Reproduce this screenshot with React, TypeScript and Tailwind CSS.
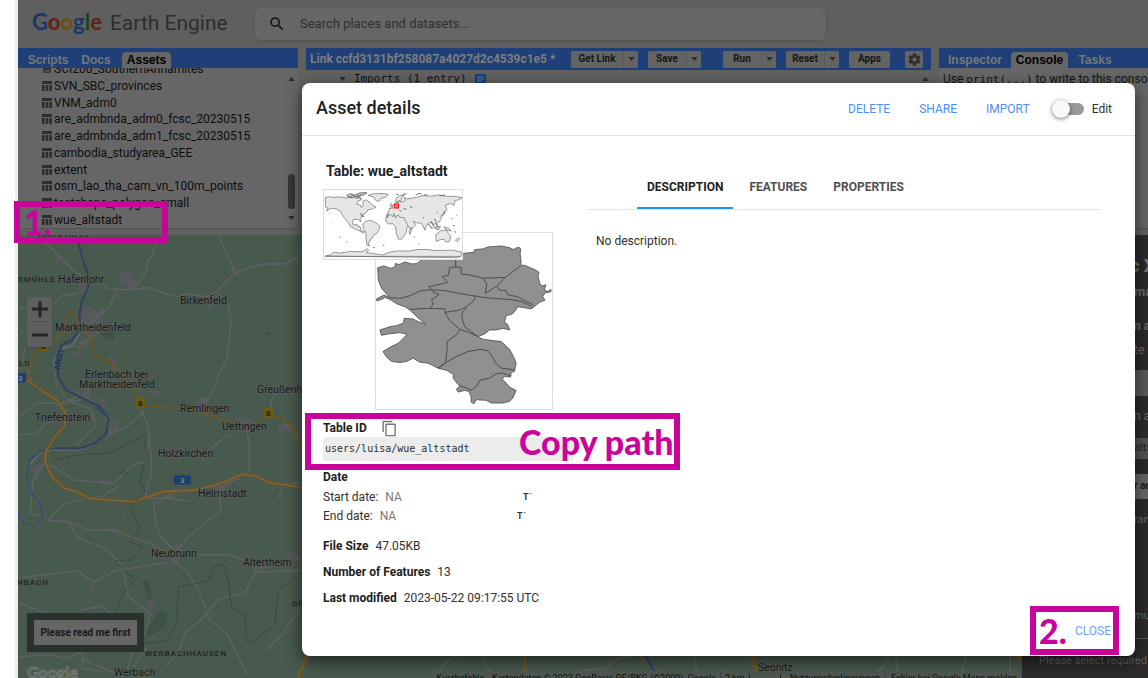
import React from "react";
import { MdContentCopy, MdSearch, MdSettings, MdImage } from "react-icons/md";

const assets = [
  "SCI200_SouthernAnnamites",
  "SVN_SBC_provinces",
  "VNM_adm0",
  "are_admbnda_adm0_fcsc_20230515",
  "are_admbnda_adm1_fcsc_20230515",
  "cambodia_studyarea_GEE",
  "extent",
  "osm_lao_tha_cam_vn_100m_points",
  "testshape_polygon_small",
  "wue_altstadt",
];

function TableIcon() {
  return (
    <svg viewBox="0 0 10 10" className="h-[10px] w-[10px] shrink-0" aria-hidden="true">
      <path d="M0 0h10v3H0zM0 4h2.6v6H0zM3.7 4h2.6v6H3.7zM7.4 4H10v6H7.4z" fill="#2d2d2d" />
    </svg>
  );
}

function Caret({ up = false }: { up?: boolean }) {
  return (
    <svg viewBox="0 0 8 5" className="h-1 w-[7px] shrink-0" aria-hidden="true">
      <path d={up ? "M0 5L4 0l4 5z" : "M0 0l4 5 4-5z"} fill="#2c2c2c" />
    </svg>
  );
}

function AssetPanel() {
  return (
    <section className="flex w-[280px] shrink-0 flex-col overflow-hidden border-b border-[#555] bg-[#666]">
      <nav className="z-10 flex h-5 shrink-0 items-end bg-[#1f3f78] pl-1 font-['Liberation_Sans',sans-serif] text-[12px] font-bold leading-4 text-[#777]">
        <button className="w-[52px] text-center">Scripts</button>
        <button className="mr-1 w-11 text-center">Docs</button>
        <button className="w-[49px] rounded-t-sm bg-[#666] text-center text-black">Assets</button>
      </nav>
      <div className="flex min-h-0 flex-1 justify-between">
        <ul className="-mt-[7px] flex h-[167px] flex-col pl-6 text-[12px] leading-4 text-[#0e0e0e]">
          {assets.map((name, i) => (
            <li key={name} className="flex min-h-0 flex-1 items-center gap-[2px]">
              {i === 0 ? <MdImage className="h-[10px] w-[10px] text-[#2d2d2d]" /> : <TableIcon />}
              <a href={"#" + name}>{name}</a>
            </li>
          ))}
        </ul>
        <div className="flex w-[14px] flex-col items-center justify-between pb-2 pt-[9px]">
          <Caret up />
          <div className="mt-auto mb-[7px] h-[35px] w-[7px] rounded-full bg-[#363636]" />
          <Caret />
        </div>
      </div>
    </section>
  );
}

function SplitButton({ label }: { label: string }) {
  return (
    <div className="flex h-[17px] rounded-xs bg-[#646464] text-[#151515]">
      <button className="w-[53px] border-r border-[#585858] text-center group-data-[narrow=true]:w-[39px]">{label}</button>
      <button aria-label={label + " options"} className="flex w-[14px] items-center justify-center">
        <Caret />
      </button>
    </div>
  );
}

function EditorPanel() {
  return (
    <section className="min-w-0 flex-1 overflow-hidden bg-[#616161]">
      <div className="flex h-[22px] items-center bg-[#1f3f78] pr-2 text-[10px] font-bold leading-4">
        <h2 className="w-[265px] shrink-0 whitespace-nowrap pl-1 text-[12px] text-[#7d7d7d]">
          Link ccfd3131bf258087a4027d2c4539c1e5 *
        </h2>
        <SplitButton label="Get Link" />
        <div data-narrow="true" className="group ml-[10px] flex flex-1 items-center">
          <SplitButton label="Save" />
          <div className="ml-auto flex gap-[10px]">
            <SplitButton label="Run" />
            <SplitButton label="Reset" />
            <button className="h-[17px] w-[41px] rounded-xs bg-[#646464] text-[#151515]">Apps</button>
          </div>
        </div>
        <button aria-label="Settings" className="ml-[15px] flex h-[17px] w-[18px] items-center justify-center rounded-xs bg-[#646464] text-[#2c2c2c]">
          <MdSettings className="h-[15px] w-[15px]" />
        </button>
      </div>
      <div className="flex h-4 items-center justify-between pr-[2px] pt-[2px]">
        <div className="flex items-center gap-2 pl-[33px] font-['DejaVu_Sans_Mono',monospace] text-[11px] leading-4 text-[#111]">
          <Caret />
          <span>Imports (1 entry)</span>
          <svg viewBox="0 0 11 11" className="h-[11px] w-[11px]" aria-hidden="true">
            <rect width="11" height="11" rx="1" fill="#123f88" />
            <path d="M2 3h7M2 5h7M2 7h5" stroke="#777" />
          </svg>
        </div>
        <Caret up />
      </div>
    </section>
  );
}

function ConsolePanel() {
  return (
    <section className="w-[209px] shrink-0 overflow-hidden border-b border-[#555] bg-[#666]">
      <nav className="flex h-5 items-end bg-[#1f3f78] pl-1 font-['Liberation_Sans',sans-serif] text-[12px] font-bold leading-4 text-[#777]">
        <button className="w-16 text-center">Inspector</button>
        <button className="mx-1 w-[57px] rounded-t-sm bg-[#666] text-center text-black">Console</button>
        <button className="w-[46px] text-center">Tasks</button>
      </nav>
      <p className="whitespace-nowrap border-b border-[#5c5c5c] pb-[9px] pl-1 pt-[3px] text-[12px] leading-4 text-[#151515]">
        Use <code className="font-['DejaVu_Sans_Mono',monospace] text-[11px]">print(...)</code> to write to this console.
      </p>
    </section>
  );
}

const places: [string, number, number][] = [
  ["Hafenlohr", 58, 283],
  ["Birkenfeld", 180, 304],
  ["Marktheidenfeld", 55, 331],
  ["Erlenbach bei", 85, 378],
  ["Marktheidenfeld", 79, 388],
  ["Greußenheim", 257, 393],
  ["Remlingen", 180, 412],
  ["Triefenstein", 35, 421],
  ["Uettingen", 222, 430],
  ["Holzkirchen", 158, 457],
  ["Helmstadt", 198, 497],
  ["Neubrunn", 151, 557],
  ["Altertheim", 243, 566],
  ["Werbach", 114, 676],
  ["Segnitz", 758, 671],
  ["Rothenfels", 38, 238],
];

const districts: [string, number, number][] = [
  ["SMÜHLE", 18, 282],
  ["LD", 19, 366],
  ["NBACH", 17, 585],
  ["WERBACHHAUSEN", 145, 656],
  ["GERCHSHEIM", 292, 606],
];

function MapCanvas() {
  return (
    <svg viewBox="18 235 1004 443" preserveAspectRatio="xMinYMin slice" className="absolute inset-0 h-full w-full" role="img" aria-label="Road map">
      <rect x="18" y="235" width="1200" height="600" fill="#48594d" />
      <g transform="translate(0 230) scale(.3333)" fill="none" strokeLinejoin="round" strokeLinecap="round">
        <g fill="#56595b">
          <path d="M160 70l25 10-3 16-14 5zM358 130l40-8 3 20 16 18-22 20-36-25zM232 150l32 2-4 35-22 5zM250 235l25-8 18 20 15-16 15 10-35 45-10 45-30-20-10-40zM235 340l38-8-20 30zM215 370l34-8-8 22zM322 380l20 2 15 38-20-10zM250 470l25 5-8 38-24-8zM290 505l35-5-15 40zM325 580l35-12-10 40-35 22zM590 505l45-5-18 45-32 5zM610 210l55-25-35 54zM695 125l38-14-24 26zM700 560l65 6-15 40-40 2zM830 580l38 10-28 20zM450 485l35-5-20 20z" />
          <path d="M85 710l50-8-25 50zM130 865l32 6-18 9zM297 745l36 6-25 17zM320 898l36-6-5 22zM488 795l32-6-8 26zM625 770l60-8-20 30zM500 950l32-10 20 25-25 42-24-20zM275 1050l12 30-25 12zM440 1115l28 6-15 34zM615 1160l40-20-30 40zM755 1010l40 8-32 20zM865 965l30 12-30 14z" />
        </g>
        <path d="M300 310l40-10 2 30-28-4zM790 310l25-5-10 14zM425 1055l20-5 12 55-12 4zM360 725l20-9 6 17-22 6zM480 1140l22 8-5 42-52 30-8-18z" fill="#3d5243" />
        <g stroke="#606366" strokeWidth="4">
          <path d="M120 20l40 40 30 30 35 35 40 25 45 15 15 10 65 5 50-8 60 20 30 8 30-8 60 8 35-20 50-50 50-20 45-8h55l50-28M465 40l-5 30-20 30v20l-10 20-32 38M660 20l10 30 20 40 15 40M660 195l25 30 8 45-3 50-10 70-30 60-15 40-25 30M350 180l-25 55-35 25-28 30M60 235l40-4 50 0 38-35 45-5M75 350l-5 40 25 60M60 300l30 20M240 340l30-12 50-40M250 350l-70 0-20 50 10 70 40 45 60 20 20 50-60 60" />
          <path d="M60 615l50-5 30-30 60-20 80 8M60 560l50-40 60 0 70-10M230 500l-60 30M425 540l20 50 10 100-3 50-15 50 10 16 60-2 60 10M605 690l35-40 50-40M905 480l-70 5-18 20-8 44M740 600l8 40v80l-30 25-60 30M660 785l2 60-50 35-45 40-35 40M520 960l-40-45-12-40-8-50 50-30M850 575l40 50M310 540l20 70 50-20 50-44" />
          <path d="M145 870l40-45 50-15 70-10 50-30M145 870l60 5 60 25 80 0 45 20 60 20 40 25 60 10h140l40 15 60 25 110-30M205 875l30 50 80 30 45 45 15 40 10 60 65 50-10 50-40 60-22 70M70 1042l160-20 50 35 70-35 150-25M520 990l45 40 30 50 30 80M905 1020l-140 8-30 60-80 20-50 60-50 40-15 50-40 50M630 1170l50 40 60 120M905 1125l-60 90-50 50M60 1280l80-5 60 10 50-20-5 50 60 10M250 1290l120 50M390 1330l20-35 30-40M215 1190l30-50 60-12 50 40 70 40M340 760l60-55 35-10 15-90M340 760l-120-10-60-40-30-10-30 50-10 100 50 10M835 805l15-40 55-8M60 1120l80 30 80 60" />
        </g>
        <path d="M100 55l-20 60M300 900l70-30-2-50 50-60" stroke="#575b59" strokeWidth="3" />
        <path d="M245 40l17 50 12 60-6 34-18 34-7 36 5 50-22 36-32 12-12 30 2 53 26 38 60 28 38 22 24 34-3 50-38 32-46 16-78 0-40 10-30 34" transform="translate(-8 5)" stroke="#65686c" strokeWidth="5" />
        <path d="M235 40l15 50 18 60-6 30-17 35-7 35 2 50-25 30-30 15-13 35 3 60 25 40 60 30 40 20 25 35-5 45-35 30-45 15-80 0-40 10-30 25" stroke="#30435f" strokeWidth="7" />
        <path d="M160 655l-40 10-30 25-10 50 15 50 25 30 8 35-15 25-35 3-20-20-15-70" stroke="#606367" strokeWidth="6" />
        <path d="M160 655l-40 10-30 25-10 50 15 50 25 30 8 35-15 25-35 3-20-20-15-70M290 535l25 20" stroke="#2e456e" strokeWidth="4" strokeDasharray="7 3" />
        <path d="M200 270l10-25 15 10 15 35 35 35 13 60 37 5 25 30 15 35 45 25 2 35 25 15 103 3 50 12 50 15 50 15 50 15 30-5 30-30 50 10 35 35 20 60M200 270l-10 40-40 30-40 20-15 30-7 60" stroke="#6c5626" strokeWidth="6" />
        <path d="M60 440l30 15 40 30 40 25 25 35v40l-30 35-25 40-5 30 10 30 20 30 30 25 35 10 40 20 60 5 70 5 40-13 50-17 100-5 80-22 55-25 40 5 45 20 95 14" stroke="#6b5426" strokeWidth="11" />
        <path d="M60 440l30 15 40 30 40 25 25 35v40l-30 35-25 40-5 30 10 30 20 30 30 25 35 10 40 20 60 5 70 5 40-13 50-17 100-5 80-22 55-25 40 5 45 20 95 14" stroke="#7c6e54" strokeWidth="3" />
        <path d="M155 655l10 35 60-15 100-5 110-55 5 60-20 80 15 30-45 50 30 60-30 40 35 15-30 40-50 2 40 40 20 15-40 50-20 60 60 50 35 35 60-10 30-50 5-110 90-20 20-45 25-5 15 50 10 80 40 25 5 80 25-4 60-50 10-100 80-60" stroke="#353e38" strokeWidth="3" strokeDasharray="4 6" />
      </g>
      <g fill="none" stroke="#5d6064" strokeWidth="2">
        <path d="M436 678l10-16 16-8M484 655l2 12 14 11M570 678l15-8 20-2 15-10 20-4M694 656l4 22M862 678l20-10 8-12M895 655l4 23M960 678l6-22M1010 655v23" />
        <path d="M525 655v23M640 655l20 20M752 655l6 23M308 655l-10 23M1016 655l6 4" stroke="#75591f" strokeWidth="3" />
        <path d="M644 655l12 18" stroke="#2e456e" strokeWidth="3" />
      </g>
      <g fontFamily="Roboto, sans-serif" fontWeight="500">
        <g fill="#6b5b13">
          <rect x="38" y="341" width="10" height="10" rx="1" />
          <rect x="135" y="398" width="10" height="10" rx="1" />
          <rect x="263" y="408" width="11" height="10" rx="1" />
        </g>
        <path d="M174 476l8-1 9 1v8l-9 1-8-1zM18 373h8v9l-8 1z" fill="#1c3f70" />
        <g fontSize="8" fill="#111">
          <text x="41" y="349">8</text>
          <text x="138" y="406">8</text>
          <text x="266" y="416">8</text>
          <text x="180" y="483" fill="#8a8a8a">3</text>
          <text x="18" y="381" fill="#8a8a8a">3</text>
        </g>
        <text x="60" y="370" fontSize="9" fill="#1f3560" transform="rotate(-80 60 370)">Main</text>
        <g fontSize="10.5" fill="#161918" stroke="#596059" strokeWidth="1.5" paintOrder="stroke" fontWeight="400">
          {places.map(([name, x, y]) => (
            <text key={name + y} x={x} y={y}>{name}</text>
          ))}
        </g>
        <g fontSize="8" fill="#202522" letterSpacing="1">
          {districts.map(([name, x, y]) => (
            <text key={name} x={x} y={y}>{name}</text>
          ))}
        </g>
        <text x="27" y="678" fontFamily="Lato, sans-serif" fontWeight="700" fontSize="16" fill="#48594d" stroke="#747a76" strokeWidth="1">Google</text>
      </g>
    </svg>
  );
}

function MapPane() {
  return (
    <main className="relative min-w-0 flex-1 overflow-hidden">
      <MapCanvas />
      <div className="absolute left-[9px] top-[62px] flex w-[25px] flex-col items-center bg-[#5e5e5e] px-1 shadow">
        <button aria-label="Zoom in" className="flex h-[25px] w-full items-center justify-center border-b border-[#505050]">
          <svg viewBox="0 0 16 16" className="h-4 w-4"><path d="M8 0v16M0 8h16" stroke="#262626" strokeWidth="3" /></svg>
        </button>
        <button aria-label="Zoom out" className="flex h-[25px] w-full items-center justify-center">
          <svg viewBox="0 0 16 16" className="h-4 w-4"><path d="M0 8h16" stroke="#262626" strokeWidth="3" /></svg>
        </button>
      </div>
      <div className="absolute left-[9px] top-[378px] bg-[#29332c] p-[7px]">
        <button className="block h-[25px] w-[103px] bg-[#666] text-[10px] font-bold text-[#181818]">Please read me first</button>
      </div>
      <footer className="absolute -bottom-[7px] right-0 flex h-[14px] items-center whitespace-nowrap bg-[#4e5851] pr-[5px] text-[9px] leading-[14px] text-[#111]">
        <span className="pl-1 pr-2">Kurzbefehle</span>
        <span className="border-r border-[#444] pr-1">Kartendaten © 2023 GeoBasis-DE/BKG (©2009), Google</span>
        <span className="pl-1">2 km</span>
        <span className="mx-1 h-2 w-8 border-x border-b border-[#222]" />
        <a href="#terms" className="border-r border-[#444] px-[5px]">Nutzungsbedingungen</a>
        <a href="#report" className="pl-[5px]">Fehler bei Google Maps melden</a>
      </footer>
    </main>
  );
}

function AppSidebar() {
  return (
    <aside className="w-[126px] shrink-0 overflow-hidden whitespace-nowrap bg-[#2b2b2b] text-[12px] leading-4 text-[#686868]">
      <div className="flex h-[135px] flex-col pl-[112px]">
        <h2 className="-ml-1 pt-[21px] text-[18px] font-bold leading-5 text-[#747474]">c X</h2>
        <h3 className="pt-2 text-[13px] font-bold">ma</h3>
        <p className="pt-[18px] font-bold">n a</p>
        <p className="pt-2">te</p>
      </div>
      <div className="h-[26px] bg-[#595959]" />
      <div className="pl-[112px] pt-3">
        <p>n a</p>
        <p className="mt-[14px] h-[21px] bg-[#515151] pt-[2px] text-[11px] text-[#252525]">alts</p>
        <p className="mt-[15px] h-[25px] bg-[#666] pt-1 text-[10px] font-bold text-[#181818]">r ad</p>
        <p className="pt-[13px] text-[11px]">ran</p>
        <p className="pt-20 text-[11px]">mu</p>
      </div>
      <hr className="mt-[14px] border-[#555]" />
      <p className="pl-[17px] pt-[14px] text-[11px] text-[#606060]">Please select required</p>
    </aside>
  );
}

function WorldMap() {
  return (
    <svg viewBox="40 27 417 211" className="h-[71px] w-[140px] border border-[#ddd] bg-white" role="img" aria-label="World overview">
      <g fill="#e6e6e6" stroke="#666" strokeWidth="2" strokeLinejoin="round">
        <path d="M42 50l12-3 10 3 20-2 22 3 18-2 14 4 10-4 4 8-12 4-2 10 12 2 2 8 6-8-2-12 10-4 14 10 8 8 8 4-10 6-14 2-4 8-10 6-4 8-6 6 2 10-8-8-14 0-4 8 4 10 10-4 2 8 8 0 2 12 12 4-4 4-14-8-14-6-12-6-6-12-8-10-8-10-8-14-12-8-16-2-16 8 6-8-8-4z" />
        <path d="M106 44l12-6 16 4 14-6 20-1-10 8-14 3-16 2zM138 39l20-4 10 2-12 5-18 2zM172 43l20-5 28 0 14 3-8 8-14 4-8 9-8-3-6-10z" />
        <path d="M166 123l12-3 12 4 12 8 7 6-4 12-6 10-9 4-4 10-8 6-5 12 4 6-8-3-3-18 0-20-8-12-2-14z" />
        <path d="M230 101l8-7 16-4 7 5 12 0 14 4 8 16 12 2-6 14-10 12-2 14-8 12-6 8-10 0-6-16-3-22-8-9-14 1-8-9 1-12z" />
        <path d="M235 92l3-9 10 0-3-7 7-5 5-4 4-3 12 0 13-4-4-10 8 4 16-2 14-2 18-6 28 2 20-4 22 4 32 1 20 4-10 6-12 2-4 16-9-7-16 5 4 14-10 10-6 6-2 14-6 8-8 3 6 10-8 8-10-16-7-4-12 10-4 14-6-13-4-8-16-2-10-4 8 10-12 13-8-3-12-22-3-9-14-2-4-7-6 3-2 6-6-13-2 10-7-7-9 3-2 7zM256 62l3-11 14-8 10 1-8 6-2 12-7-4-4 7z" />
        <path d="M379 164l10-7 8-8 8 3 5-5 5 9 7 7 3 12-6 11-10-1-4-7-12 1-12 5zM298 152l6-10 1 8-5 13zM356 130l9 10 5 5-4-1zM370 135l10-8 3 12-9 4zM386 138l8 0-4 7zM403 140l16 5 8 7-12-1zM398 106l6-5 4-10-3 10-6 6zM439 181l9-9 4 4-8 10zM240 76l2-8 4 6-1 7z" />
        <path d="M42 229l16-4 8-8 20 3 30-5 38 1 16-9 4 3-6 9 20 2 28 5 22-9 28-4 30 1 26-5 30 0 28 3 50-1 30 6-4 12-10 5z" />
        <path d="M40 230h417" />
      </g>
      <path d="M258 40l8 1M278 41l12-3M318 43l10-6 8 2M344 42h10M390 45l18-3M54 98l2 2M60 126l1 1M84 172l4-2M106 185h3M188 203h5M218 195l4 3M312 170l3 2M342 110v4M428 112l2 4M432 135l5 2M436 152l5 6M442 104l1 2M326 192l3 1M382 98l4-4M376 115l3 8M148 99l8 5M150 106l11 2M110 46l14 6M128 42l10 8M142 48l8 6M118 40l18 8M150 42l-12 8M268 88l6 6M280 84l10 2M300 78l8 2M364 122l8 12M380 146l10 2" stroke="#555" strokeWidth="2.5" fill="none" />
      <rect x="253" y="70" width="12" height="12" fill="#f88" stroke="#f11515" strokeWidth="3.5" />
    </svg>
  );
}

function Geometry() {
  return (
    <svg viewBox="198 248 530 530" className="h-[178px] w-[178px] border border-[#ddd] bg-white" role="img" aria-label="Feature outlines">
      <g fill="#909090" stroke="#4d4d4d" strokeWidth="2.5" strokeLinejoin="round">
        <path d="M203 353L222 347 240 354 254 352 257 340 268 343 285 335 305 341 322 340 330 332 350 315 457 310 492 306 495 298 520 296 535 290 575 287 600 292 612 298 618 294 628 291 634 296 632 310 635 335 633 345 645 345 680 360 689 367 686 380 692 402 700 407 710 404 704 420 715 424 725 418 725 425 707 428 700 440 707 450 690 457 672 472 665 477 650 474 625 470 618 482 608 492 590 497 585 515 595 525 601 540 580 535 560 540 540 540 525 552 505 560 520 568 575 575 600 598 612 620 620 640 615 665 605 668 603 682 585 680 578 688 590 700 600 712 620 722 610 745 600 755 580 760 545 760 530 752 500 750 493 762 485 758 484 740 478 725 465 722 445 727 440 718 450 710 430 685 432 675 412 662 385 655 355 640 330 637 310 625 290 635 270 638 245 635 230 622 219 605 240 592 265 580 280 565 292 553 270 548 235 552 214 556 210 540 240 530 260 527 280 520 283 505 310 507 325 515 348 522 332 510 300 480 285 470 262 462 240 448 225 442 215 448 200 452 200 446 222 435 240 443 215 415 205 390Z" />
        <g fill="none" strokeWidth="3">
          <path d="M240 443L270 445 300 437 330 423 357 419 400 421 450 430 490 437 530 443 610 449 640 455 668 470M438 325V350L420 352 416 375 398 380 414 397 357 410 370 425 388 433 365 450 370 462 362 475M438 350L455 353 455 372 478 374 520 384 587 382 633 347M587 382L562 408 570 420 590 422 594 434 625 440 640 448 672 465M520 384L532 402 527 430 562 408" />
          <path d="M300 478L350 475 405 476 407 487 450 480 470 470 490 455 497 443 490 437M470 472L457 490 457 505 465 530 505 560M405 487L420 512 450 538 480 548 505 560M450 538L440 555 412 575 412 600 407 640 385 655 410 637 440 620 475 605 515 598 535 603 548 620 558 640 575 655 615 660M605 678L580 670 560 672 540 685 510 692 500 710 485 722 465 712 450 708" />
        </g>
      </g>
    </svg>
  );
}

function AssetDialog() {
  return (
    <div role="dialog" aria-labelledby="dialog-title" className="absolute bottom-[22px] left-[302px] right-[13px] top-[83px] flex flex-col rounded-lg bg-white text-[12px] leading-4 text-[#303030] shadow-[0_5px_16px_rgba(0,0,0,0.6)]">
      <header className="flex h-[53px] shrink-0 items-center border-b border-[#e4e4e4] pl-[14px] pr-[23px]">
        <h1 id="dialog-title" className="pb-[2px] text-[18px] font-medium leading-6 text-[#212121]">Asset details</h1>
        <div className="ml-auto flex items-center gap-[29px] text-[12px] text-[#4c8df6]">
          <button>DELETE</button>
          <button>SHARE</button>
          <button>IMPORT</button>
        </div>
        <label className="ml-[22px] flex cursor-pointer items-center gap-2 text-[12px] text-[#303030]">
          <span className="relative flex h-5 w-8 items-center justify-end">
            <input type="checkbox" role="switch" className="peer sr-only" />
            <span className="h-3 w-7 rounded-full bg-[#999]" />
            <span className="absolute left-0 h-[18px] w-[18px] rounded-full bg-[#fafafa] shadow-[0_1px_4px_rgba(0,0,0,0.55)] peer-checked:left-[14px]" />
          </span>
          Edit
        </label>
      </header>
      <div className="flex min-h-0 flex-1 pl-[21px] pr-[34px]">
        <div className="w-[265px] shrink-0">
          <h2 className="pl-[3px] pt-[25px] text-[14px] font-bold leading-5 text-[#212121]">Table: wue_altstadt</h2>
          <div className="relative mt-2 h-[220px]">
            <div className="pl-[52px] pt-[43px]"><Geometry /></div>
            <div className="absolute left-0 top-0"><WorldMap /></div>
          </div>
          <div className="mt-[10px] flex h-[18px] items-center gap-[14px]">
            <h3 className="font-bold text-[#212121]">Table ID</h3>
            <button aria-label="Copy table ID"><MdContentCopy className="h-[17px] w-[17px] text-[#777]" /></button>
          </div>
          <div className="w-[251px] rounded-sm bg-[#ececec] pl-[2px] font-['DejaVu_Sans_Mono',monospace] text-[10px] leading-6 text-[#303030]">users/luisa/wue_altstadt</div>
          <h3 className="mt-2 font-bold text-[#212121]">Date</h3>
          <div className="mt-1 flex items-center justify-between pr-14">
            <p>Start date: <span className="pl-1 text-[#777]">NA</span></p>
            <span className="flex gap-px text-[9px] font-bold"><span>T</span><span>˙</span></span>
          </div>
          <div className="mt-[3px] flex items-center justify-between pr-[62px]">
            <p>End date: <span className="pl-1 text-[#777]">NA</span></p>
            <span className="flex gap-px text-[9px] font-bold"><span>T</span><span>˙</span></span>
          </div>
          <div className="mt-[14px] flex flex-col gap-[10px]">
            <p><b className="pr-1 text-[#212121]">File Size</b> 47.05KB</p>
            <p><b className="pr-1 text-[#212121]">Number of Features</b> 13</p>
            <p><b className="pr-1 text-[#212121]">Last modified</b> 2023-05-22 09:17:55 UTC</p>
          </div>
        </div>
        <div className="flex-1 pt-[34px]">
          <div role="tablist" className="flex border-b border-[#e4e4e4] pl-[49px] text-[12px] font-bold text-[#505050]">
            <button role="tab" aria-selected="true" className="h-[39px] border-b-2 border-[#1e96f0] px-[10px] pb-1 text-[#212121]">DESCRIPTION</button>
            <button role="tab" aria-selected="false" className="ml-[6px] px-[10px] pb-[5px]">FEATURES</button>
            <button role="tab" aria-selected="false" className="ml-[6px] px-[10px] pb-[5px]">PROPERTIES</button>
          </div>
          <p className="pl-2 pt-[23px]">No description.</p>
        </div>
      </div>
      <button className="absolute bottom-[17px] right-6 text-[12px] text-[#70a2f3]">CLOSE</button>
    </div>
  );
}

export default function App() {
  return (
    <div className="relative flex h-screen flex-col overflow-hidden bg-white pl-[18px] font-['Roboto',sans-serif]">
      <header className="flex h-[47px] shrink-0 items-center bg-[#5f5f5f] shadow-[-3px_0_0_#eee]">
        <a href="#home" className="flex w-[237px] items-baseline gap-2 pb-[2px] pl-[14px] text-[21px] leading-8 text-[#2e2e2e]">
          <span className="font-['Lato',sans-serif] text-[22px] font-bold">
            <span className="text-[#1c3868]">G</span>
            <span className="text-[#632019]">o</span>
            <span className="text-[#6b5106]">o</span>
            <span className="text-[#1c3868]">g</span>
            <span className="text-[#15451f]">l</span>
            <span className="text-[#632019]">e</span>
          </span>
          <span className="whitespace-nowrap">Earth Engine</span>
        </a>
        <label className="flex h-8 w-[571px] items-center gap-[14px] rounded-md bg-[#666] pl-[13px] shadow-sm">
          <MdSearch className="h-[18px] w-[18px] text-[#111]" aria-label="Search" />
          <input type="search" placeholder="Search places and datasets..." className="min-w-0 flex-1 bg-transparent text-[13px] placeholder:text-[#303030]" />
        </label>
      </header>
      <div className="flex h-[188px] shrink-0 gap-2 bg-[#606060] pb-[6px] pt-px shadow-[-3px_0_0_#eee]">
        <AssetPanel />
        <EditorPanel />
        <ConsolePanel />
      </div>
      <div className="flex min-h-0 flex-1 shadow-[-3px_0_0_#eee]">
        <MapPane />
        <AppSidebar />
      </div>

      <AssetDialog />

      <div className="pointer-events-none absolute left-[14px] top-[201px] flex h-[42px] w-[154px] items-center border-[6px] border-[#c9049b] pl-1 font-['Lato',sans-serif] text-[34px] font-black leading-8 text-[#c9049b]">1.</div>
      <div className="pointer-events-none absolute left-[305px] top-[413px] flex h-[57px] w-[375px] items-center whitespace-nowrap border-[6px] border-[#c9049b] pl-[208px] font-['Lato',sans-serif] text-[34px] font-black leading-8 text-[#c9049b]">Copy path</div>
      <div className="pointer-events-none absolute bottom-[23px] right-[29px] flex h-[49px] w-[89px] items-center border-[6px] border-[#c9049b] pl-[3px] font-['Lato',sans-serif] text-[34px] font-black leading-8 text-[#c9049b]">2.</div>
    </div>
  );
}
